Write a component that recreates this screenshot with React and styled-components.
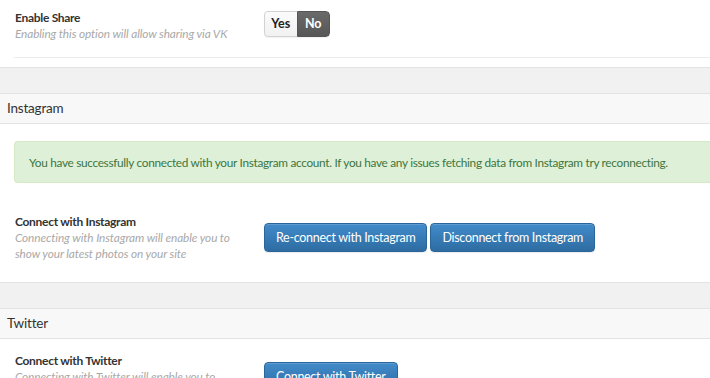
import React from "react";
import styled, { createGlobalStyle } from "styled-components";

const Global = createGlobalStyle`
  html, body { margin: 0; padding: 0; }
  body {
    background: #f1f1f1;
    font-family: Lato, "Open Sans", Arial, sans-serif;
    color: #333;
    overflow: hidden;
  }
`;

const Page = styled.div`
  width: 710px;
  height: 378px;
  overflow: hidden;
  background: #f1f1f1;
`;

const Panel = styled.section`
  background: #fff;
  border-top: ${(p) => (p.$first ? "none" : "1px solid #e3e3e3")};
  border-bottom: 1px solid #e3e3e3;
  margin-bottom: 25px;
`;

const PanelHeader = styled.div`
  height: 29px;
  line-height: 29px;
  padding-left: 7px;
  background: #f8f8f8;
  border-bottom: 1px solid #e3e3e3;
  font-size: 13.5px;
  letter-spacing: -0.2px;
  color: #333;
`;

const PanelBody = styled.div`
  padding-bottom: ${(p) => p.$pb || 0}px;
`;

const Alert = styled.div`
  margin: 17px 0 0 14px;
  height: 40px;
  display: flex;
  align-items: center;
  padding-left: 14px;
  background: #dff0d8;
  border: 1px solid #d6e9c6;
  border-right: none;
  border-radius: 4px 0 0 4px;
  color: #3c763d;
  font-size: 11.8px;
  letter-spacing: -0.3px;
  white-space: nowrap;
`;

const Row = styled.div`
  margin-left: 14px;
  padding: ${(p) => p.$pt}px 0 ${(p) => p.$pb}px 1px;
  display: grid;
  grid-template-columns: 249px auto;
  align-items: center;
  border-bottom: ${(p) => (p.$divider ? "1px solid #ececec" : "none")};
`;

const Label = styled.div`
  width: 226px;
`;

const Title = styled.div`
  font-size: 12px;
  font-weight: 700;
  letter-spacing: -0.3px;
  line-height: 16px;
  color: #333;
`;

const Desc = styled.div`
  font-size: 11.8px;
  font-style: italic;
  letter-spacing: -0.1px;
  line-height: 16px;
  color: #a9a9a9;
`;

const Controls = styled.div`
  display: flex;
  gap: 3px;
  margin-top: ${(p) => p.$shift || 0}px;
`;

const Button = styled.button`
  height: 29px;
  padding: 0 11px;
  font-family: inherit;
  font-size: 12.5px;
  letter-spacing: -0.3px;
  color: #fff;
  background: linear-gradient(to bottom, #428bca 0%, #2d6ca2 100%);
  border: 1px solid #2b669a;
  border-radius: 4px;
  box-shadow: inset 0 1px 0 rgba(255, 255, 255, 0.15), 0 1px 1px rgba(0, 0, 0, 0.08);
  white-space: nowrap;
  cursor: pointer;
`;

const Toggle = styled.div`
  display: flex;
  height: 26px;
  width: 66px;
  border-radius: 4px;
  overflow: hidden;
  box-shadow: 0 1px 1px rgba(0, 0, 0, 0.06);
`;

const ToggleOption = styled.span`
  flex: 1;
  display: flex;
  align-items: center;
  justify-content: center;
  font-size: 12.5px;
  font-weight: 700;
  color: ${(p) => (p.$active ? "#fff" : "#222")};
  background: ${(p) =>
    p.$active
      ? "linear-gradient(to bottom, #6a6a6a, #575757)"
      : "linear-gradient(to bottom, #fbfbfb, #f1f1f1)"};
  border: 1px solid ${(p) => (p.$active ? "#555" : "#d2d2d2")};
  border-right: ${(p) => (p.$active ? "1px solid #555" : "none")};
  border-radius: ${(p) => (p.$active ? "0 4px 4px 0" : "4px 0 0 4px")};
`;

export default function App() {
  return (
    <Page>
      <Global />
      <Panel $first>
        <PanelBody $pb={9}>
          <Row $pt={10} $pb={15} $divider>
            <Label>
              <Title>Enable Share</Title>
              <Desc>Enabling this option will allow sharing via VK</Desc>
            </Label>
            <Controls $shift={-5}>
              <Toggle>
                <ToggleOption>Yes</ToggleOption>
                <ToggleOption $active>No</ToggleOption>
              </Toggle>
            </Controls>
          </Row>
        </PanelBody>
      </Panel>
      <Panel>
        <PanelHeader>Instagram</PanelHeader>
        <PanelBody>
          <Alert>
            You have successfully connected with your Instagram account. If you have any issues fetching data from Instagram try reconnecting.
          </Alert>
          <Row $pt={31} $pb={20}>
            <Label>
              <Title>Connect with Instagram</Title>
              <Desc>Connecting with Instagram will enable you to show your latest photos on your site</Desc>
            </Label>
            <Controls $shift={-1}>
              <Button>Re-connect with Instagram</Button>
              <Button>Disconnect from Instagram</Button>
            </Controls>
          </Row>
        </PanelBody>
      </Panel>
      <Panel>
        <PanelHeader>Twitter</PanelHeader>
        <PanelBody>
          <Row $pt={14} $pb={20}>
            <Label>
              <Title>Connect with Twitter</Title>
              <Desc>Connecting with Twitter will enable you to show your latest tweets on your site</Desc>
            </Label>
            <Controls $shift={-1}>
              <Button>Connect with Twitter</Button>
            </Controls>
          </Row>
        </PanelBody>
      </Panel>
    </Page>
  );
}
